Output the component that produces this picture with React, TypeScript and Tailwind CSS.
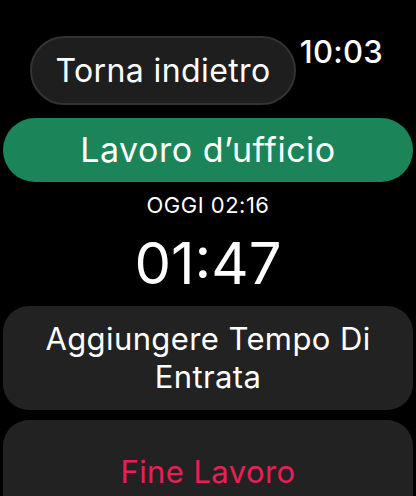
import React from "react";

const font = { fontFamily: "Inter, 'Noto Sans', sans-serif" };

export default function App() {
  return (
    <div
      className="w-[416px] h-[496px] overflow-hidden bg-black text-white flex flex-col px-[3px]"
      style={font}
    >
      {/* header: back pill + clock */}
      <div className="shrink-0 flex items-start pt-[36px] pl-[27px]">
        <button className="w-[266px] h-[69px] rounded-full bg-[#1e1e1e] border-[2px] border-[#333333] flex items-center justify-center text-[32px] leading-none tracking-[0.4px] text-white">
          Torna indietro
        </button>
        <div className="ml-auto mr-[30px] mt-[0px] text-[31px] leading-[31px] font-medium tracking-[0.3px]">
          10:03
        </div>
      </div>

      {/* activity title */}
      <div className="shrink-0 mt-[13px] h-[64px] rounded-[32px] bg-[#1b8559] flex items-center justify-center text-[34px] leading-none tracking-[0.5px]">
        Lavoro d’ufficio
      </div>

      <div className="shrink-0 mt-[12px] text-center text-[22px] leading-[22px] tracking-[0.5px]">OGGI 02:16</div>
      <div className="shrink-0 mt-[18px] text-center text-[58px] leading-[58px]">01:47</div>

      {/* actions */}
      <div className="shrink-0 mt-[14px] h-[104px] rounded-[26px] bg-[#222222] flex items-center justify-center text-center text-[31px] leading-[38px] tracking-[0.4px] px-2">
        Aggiungere Tempo Di
        <br />
        Entrata
      </div>
      <div className="shrink-0 mt-[10px] h-[104px] rounded-[26px] bg-[#222222] flex items-center justify-center text-center text-[31px] leading-[38px] tracking-[0.4px] text-[#ea1f57]">
        Fine Lavoro
      </div>
    </div>
  );
}
